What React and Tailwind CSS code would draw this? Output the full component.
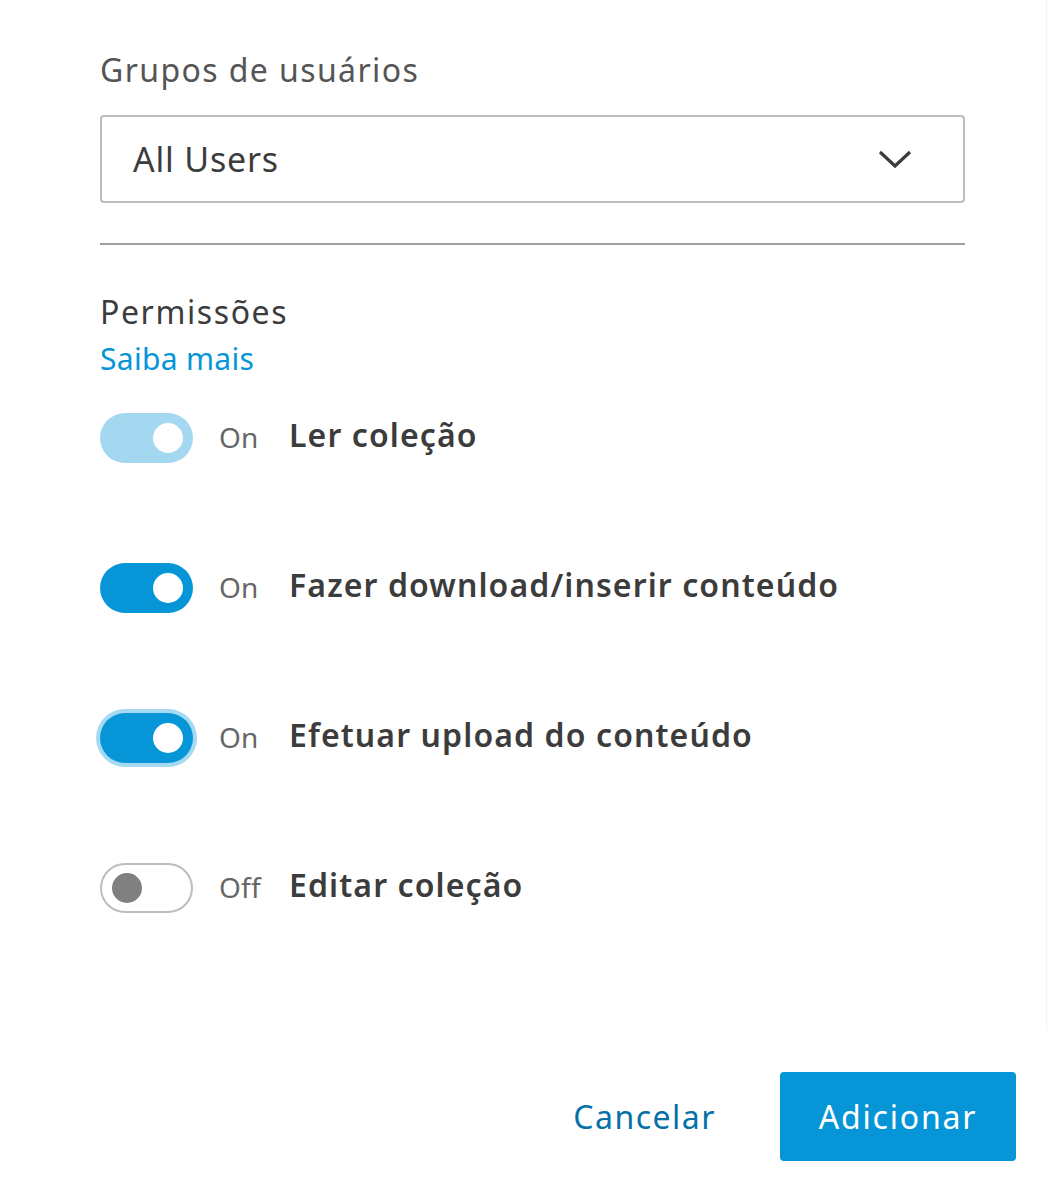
import React from "react";

const font = { fontFamily: '"Noto Sans", "Open Sans", Arial, sans-serif' };

function Toggle({ state }) {
  if (state === "off") {
    return (
      <div className="w-[93px] h-[50px] rounded-full border-2 border-[#bdbdbd] bg-white flex items-center pl-[10px] shrink-0">
        <div className="w-[30px] h-[30px] rounded-full bg-[#808080]" />
      </div>
    );
  }
  const bg = state === "disabled" ? "bg-[#a3d8f0]" : "bg-[#0696d7]";
  const ring = state === "focus" ? "shadow-[0_0_0_4px_#a6daf2]" : "";
  return (
    <div className={`w-[93px] h-[50px] rounded-full ${bg} ${ring} flex items-center justify-end pr-[10px] shrink-0`}>
      <div className="w-[30px] h-[30px] rounded-full bg-white" />
    </div>
  );
}

function Row({ state, label, title, first }) {
  return (
    <div className={`flex items-center h-[50px] ${first ? "mt-[34px]" : "mt-[100px]"}`}>
      <Toggle state={state} />
      <span className="ml-[26px] w-[70px] text-[28px] leading-[40px] text-[#666666] tracking-[0.2px] mb-[2px]">{label}</span>
      <span className="text-[32px] leading-[40px] font-semibold text-[#3c3c3c] tracking-[1.1px] mb-[7px]">{title}</span>
    </div>
  );
}

export default function App() {
  return (
    <div style={font} className="relative w-[1048px] h-[1198px] bg-white overflow-hidden">
      <div className="absolute right-[1px] top-0 h-[1030px] w-px bg-[#f2f2f2]" />
      <div className="pl-[100px] pr-[83px] pt-[50px]">
        <div className="text-[32px] leading-[40px] text-[#555555] tracking-[1.4px]">Grupos de usuários</div>
        <div className="mt-[25px] h-[88px] rounded-[4px] border-2 border-[#bdbdbd] flex items-center justify-between pl-[31px] pr-[51px]">
          <span className="text-[34px] leading-[40px] text-[#3c3c3c] tracking-[0.8px]">All Users</span>
          <svg width="34" height="20" viewBox="0 0 34 20">
            <path d="M2 3 L17 17 L32 3" fill="none" stroke="#3c3c3c" strokeWidth="3.2" />
          </svg>
        </div>
        <div className="mt-[40px] h-[2px] bg-[#a0a0a0]" />
        <div className="mt-[47px] text-[32px] leading-[40px] text-[#3c3c3c] tracking-[1.6px]">Permissões</div>
        <div className="mt-[7px] text-[30px] leading-[40px] text-[#0696d7] tracking-[0.3px]">Saiba mais</div>
        <Row first state="disabled" label="On" title="Ler coleção" />
        <Row state="on" label="On" title="Fazer download/inserir conteúdo" />
        <Row state="focus" label="On" title="Efetuar upload do conteúdo" />
        <Row state="off" label="Off" title="Editar coleção" />
      </div>
      <div className="absolute left-0 right-[32px] top-[1072px] flex justify-end items-center">
        <span className="text-[32px] leading-[40px] text-[#0670a8] mr-[64px] tracking-[1.5px]">Cancelar</span>
        <button className="w-[236px] h-[89px] rounded-[4px] bg-[#0696d7] text-white text-[32px] leading-[40px] tracking-[1.8px]">
          Adicionar
        </button>
      </div>
    </div>
  );
}
